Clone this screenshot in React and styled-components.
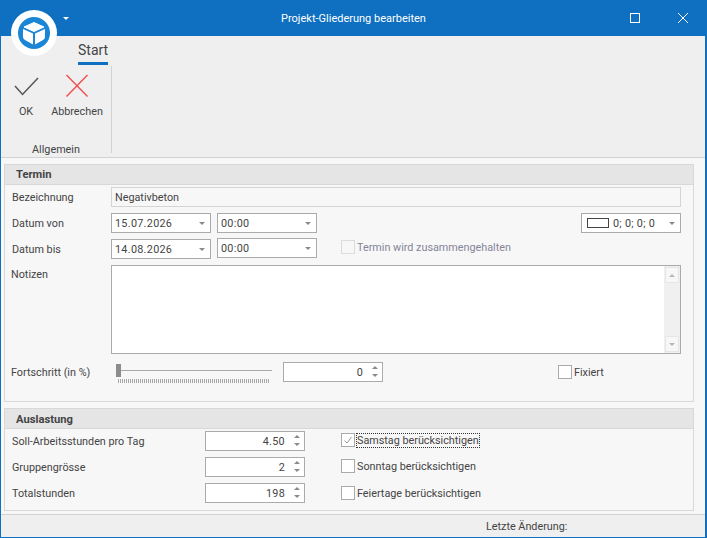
import React from 'react';
import styled, { createGlobalStyle } from 'styled-components';

const GlobalStyle = createGlobalStyle`
  html, body {
    margin: 0;
    padding: 0;
    background: #f0f0f0;
  }
`;

const Window = styled.div`
  position: relative;
  width: 707px;
  height: 538px;
  box-sizing: border-box;
  overflow: hidden;
  display: flex;
  flex-direction: column;
  background: #f7f7f7;
  border-left: 1px solid #0f6fc0;
  border-right: 2px solid #0f6fc0;
  border-bottom: 1px solid #0f6fc0;
  font-family: Roboto, 'Open Sans', sans-serif;
  font-size: 10.8px;
  color: #444;
`;

const TitleBar = styled.div`
  flex: 0 0 36px;
  margin: 0 -2px 0 -1px;
  background: #0f6fc0;
  color: #fff;
  font-size: 11px;
  display: flex;
  align-items: center;
  justify-content: center;
  box-sizing: border-box;
`;

const WindowButton = styled.svg`
  position: absolute;
  top: 12px;
  left: ${(p) => p.$left}px;
`;

const LogoWrap = styled.svg`
  position: absolute;
  left: 10px;
  top: 9px;
`;

const Caret = styled.div`
  position: absolute;
  left: 62px;
  top: 17px;
  border-left: 3px solid transparent;
  border-right: 3px solid transparent;
  border-top: 3px solid #fff;
`;

const Ribbon = styled.div`
  flex: 0 0 122px;
  background: #efefef;
  border-bottom: 1px solid #d2d2d2;
  box-sizing: border-box;
  display: flex;
  flex-direction: column;
`;

const TabStrip = styled.div`
  height: 30px;
  flex: none;
  padding: 5px 0 0 77px;
  box-sizing: border-box;
`;

const Tab = styled.div`
  display: inline-block;
  height: 21px;
  line-height: 18px;
  font-size: 14px;
  color: #444;
  border-bottom: 3px solid #0f6fc0;
`;

const RibbonGroup = styled.div`
  width: 110px;
  height: 87px;
  border-right: 1px solid #d2d2d2;
  display: flex;
  flex-direction: column;
`;

const RibbonButtons = styled.div`
  display: flex;
  flex: none;
  height: 76px;
  padding-top: 8px;
  box-sizing: border-box;
`;

const RibbonButton = styled.div`
  width: ${(p) => p.$width}px;
  display: flex;
  flex-direction: column;
  align-items: center;
  gap: 5px;
  line-height: 13px;
`;

const GroupLabel = styled.div`
  flex: none;
  text-align: center;
  line-height: 15px;
`;

const Content = styled.div`
  flex: 1;
  display: flex;
  flex-direction: column;
  padding: 6px 11px 0 3px;
  gap: 6px;
`;

const Panel = styled.section`
  height: ${(p) => p.$height}px;
  box-sizing: border-box;
  border: 1px solid #d8d8d8;
  background: #f7f7f7;
`;

const PanelHeader = styled.div`
  height: 20px;
  line-height: ${(p) => p.$line || 20}px;
  padding-left: 11px;
  background: #e5e5e5;
  border-bottom: 1px solid #d8d8d8;
  box-sizing: border-box;
  font-size: 11.2px;
  font-weight: 700;
  color: #444;
`;

const PanelBody = styled.div`
  padding: 2px 12px 0 7px;
  display: flex;
  flex-direction: column;
`;

const Row = styled.div`
  display: flex;
  align-items: ${(p) => p.$align || 'center'};
  height: ${(p) => p.$height || 20}px;
  margin-top: ${(p) => p.$top || 0}px;
`;

const Label = styled.label`
  width: ${(p) => p.$width || 99}px;
  flex: none;
  padding-top: ${(p) => p.$pad || 0}px;
  margin-left: ${(p) => (p.$outdent ? -1 : 0)}px;
  padding-right: ${(p) => (p.$outdent ? 1 : 0)}px;
`;

const Field = styled.div`
  width: ${(p) => p.$width || 100}px;
  height: 20px;
  flex: none;
  box-sizing: border-box;
  border: 1px solid ${(p) => (p.$readonly ? '#d4d4d4' : '#ababab')};
  background: ${(p) => (p.$readonly ? '#f7f7f7' : '#fff')};
  margin-left: ${(p) => p.$left || 0}px;
  margin-top: ${(p) => p.$shift || 0}px;
  padding: 0 3px;
  display: flex;
  align-items: center;
  justify-content: ${(p) => (p.$right ? 'flex-end' : 'flex-start')};
  letter-spacing: ${(p) => (p.$readonly ? 0 : 0.3)}px;
  position: relative;
`;

const DropArrow = styled.span`
  margin-left: auto;
  margin-right: 2px;
  border-left: 3px solid transparent;
  border-right: 3px solid transparent;
  border-top: 3px solid #8a8a8a;
`;

const SpinValue = styled.span`
  margin-right: 16px;
`;

const SpinButtons = styled.div`
  position: absolute;
  right: 4px;
  top: 3px;
  display: flex;
  flex-direction: column;
  gap: 5px;
`;

const SpinUp = styled.span`
  border-left: 3px solid transparent;
  border-right: 3px solid transparent;
  border-bottom: 3px solid #8a8a8a;
`;

const SpinDown = styled.span`
  border-left: 3px solid transparent;
  border-right: 3px solid transparent;
  border-top: 3px solid #8a8a8a;
`;

const ScrollUp = styled(SpinUp)`
  border-bottom-color: #b8b8b8;
`;

const ScrollDown = styled(SpinDown)`
  border-top-color: #b8b8b8;
`;

const Swatch = styled.span`
  width: 20px;
  height: 8px;
  border: 1px solid #444;
  background: #fff;
  margin: 0 4px 0 2px;
`;

const Spacer = styled.div`
  flex: 1;
`;

const Notes = styled.div`
  width: 570px;
  height: 89px;
  box-sizing: border-box;
  border: 1px solid #ababab;
  background: #fff;
  display: flex;
  justify-content: flex-end;
`;

const ScrollTrack = styled.div`
  width: 16px;
  background: #f0f0f0;
  display: flex;
  flex-direction: column;
  justify-content: space-between;
`;

const ScrollButton = styled.div`
  height: 14px;
  margin: 1px;
  background: #f7f7f7;
  border: 1px solid #e6e6e6;
  display: flex;
  align-items: center;
  justify-content: center;
`;

const SliderBox = styled.div`
  position: relative;
  width: 160px;
  height: 20px;
  margin-left: 4px;
  flex: none;
`;

const SliderLine = styled.div`
  position: absolute;
  left: 1px;
  right: 3px;
  top: 8px;
  height: 1px;
  background: #a8a8a8;
`;

const SliderThumb = styled.div`
  position: absolute;
  left: 1px;
  top: 2px;
  width: 5px;
  height: 13px;
  background: #8c8c8c;
`;

const SliderTicks = styled.div`
  position: absolute;
  left: 3px;
  top: 17px;
  width: 151px;
  height: 4px;
  background: repeating-linear-gradient(90deg, #a8a8a8 0 1px, transparent 1px 2px);
`;

const CheckWrap = styled.div`
  display: flex;
  align-items: center;
  gap: 2px;
  margin-left: ${(p) => p.$left || 0}px;
  margin-top: ${(p) => p.$shift || 0}px;
  flex: none;
  color: ${(p) => (p.$disabled ? '#85859a' : 'inherit')};
`;

const Box = styled.span`
  width: 14px;
  height: 14px;
  box-sizing: border-box;
  border: 1px solid ${(p) => (p.$disabled ? '#dcdcdc' : '#ababab')};
  background: ${(p) => (p.$disabled ? '#f7f7f7' : '#fff')};
  display: flex;
  align-items: center;
  justify-content: center;
`;

const CheckText = styled.span`
  outline: ${(p) => (p.$focused ? '1px dotted #333' : 'none')};
  line-height: 13px;
`;

const StatusBar = styled.div`
  margin-top: 3px;
  flex: 1;
  background: #efefef;
  border-top: 1px solid #d2d2d2;
  display: flex;
  align-items: center;
  padding-left: 485px;
`;

function DateField({ value, width = 100, left, shift }) {
  return (
    <Field $width={width} $left={left} $shift={shift}>
      {value}
      <DropArrow />
    </Field>
  );
}

function SpinField({ value, left }) {
  return (
    <Field $right $left={left}>
      <SpinValue>{value}</SpinValue>
      <SpinButtons>
        <SpinUp />
        <SpinDown />
      </SpinButtons>
    </Field>
  );
}

function Check({ text, left, shift, checked, disabled, focused }) {
  return (
    <CheckWrap $left={left} $shift={shift} $disabled={disabled}>
      <Box $disabled={disabled}>
        {checked && (
          <svg width="10" height="10" viewBox="0 0 10 10">
            <path d="M1.5 5.5 L4 8 L8.5 2" fill="none" stroke="#9a9a9a" strokeWidth="1" />
          </svg>
        )}
      </Box>
      <CheckText $focused={focused}>{text}</CheckText>
    </CheckWrap>
  );
}

export default function App() {
  return (
    <Window>
      <GlobalStyle />
      <TitleBar>Projekt-Gliederung bearbeiten</TitleBar>
      <LogoWrap width="48" height="48" viewBox="0 0 48 48">
        <circle cx="23" cy="24" r="23" fill="#fff" />
        <circle cx="23" cy="24" r="16" fill="#1b86d6" />
        <path d="M23 13.5 L33 18 L23 22.5 L13 18 Z" fill="#fff" stroke="#fff" strokeLinejoin="round" />
        <path d="M12 20 L22 24.5 L22 35.5 L14 31 Q12 30 12 28 Z" fill="#fff" />
        <path d="M34 20 L24 24.5 L24 35.5 L32 31 Q34 30 34 28 Z" fill="#fff" />
      </LogoWrap>
      <Caret />
      <WindowButton $left={628} width="12" height="12" viewBox="0 0 12 12">
        <rect x="1.5" y="1.5" width="9" height="9" fill="none" stroke="#fff" />
      </WindowButton>
      <WindowButton $left={676} width="12" height="12" viewBox="0 0 12 12">
        <path d="M1 1 L11 11 M11 1 L1 11" stroke="#fff" fill="none" />
      </WindowButton>

      <Ribbon>
        <TabStrip>
          <Tab>Start</Tab>
        </TabStrip>
        <RibbonGroup>
          <RibbonButtons>
            <RibbonButton $width={50}>
              <svg width="26" height="26" viewBox="0 0 26 26">
                <path d="M2 12 L9.5 20.5 L25 4" fill="none" stroke="#555" strokeWidth="1.5" />
              </svg>
              OK
            </RibbonButton>
            <RibbonButton $width={52}>
              <svg width="26" height="26" viewBox="0 0 26 26">
                <path d="M2.5 1 L23.5 22.5 M23.5 1 L2.5 22.5" fill="none" stroke="#f04e4e" strokeWidth="1.4" />
              </svg>
              Abbrechen
            </RibbonButton>
          </RibbonButtons>
          <GroupLabel>Allgemein</GroupLabel>
        </RibbonGroup>
      </Ribbon>

      <Content>
        <Panel $height={238}>
          <PanelHeader>Termin</PanelHeader>
          <PanelBody>
            <Row>
              <Label>Bezeichnung</Label>
              <Field $readonly $width={570}>Negativbeton</Field>
            </Row>
            <Row $top={6}>
              <Label>Datum von</Label>
              <DateField value="15.07.2026" />
              <DateField value="00:00" left={6} />
              <Spacer />
              <Field>
                <Swatch />
                0; 0; 0; 0
                <DropArrow />
              </Field>
            </Row>
            <Row $top={6}>
              <Label>Datum bis</Label>
              <DateField value="14.08.2026" />
              <DateField value="00:00" left={6} shift={-2} />
              <Check text="Termin wird zusammengehalten" left={24} shift={-4} disabled />
            </Row>
            <Row $top={6} $height={89} $align="flex-start">
              <Label $pad={3} $outdent>Notizen</Label>
              <Notes>
                <ScrollTrack>
                  <ScrollButton><ScrollUp /></ScrollButton>
                  <ScrollButton><ScrollDown /></ScrollButton>
                </ScrollTrack>
              </Notes>
            </Row>
            <Row $top={8}>
              <Label $outdent>Fortschritt (in %)</Label>
              <SliderBox>
                <SliderLine />
                <SliderThumb />
                <SliderTicks />
              </SliderBox>
              <SpinField value="0" left={8} />
              <Check text="Fixiert" left={175} />
            </Row>
          </PanelBody>
        </Panel>

        <Panel $height={103}>
          <PanelHeader $line={22}>Auslastung</PanelHeader>
          <PanelBody>
            <Row>
              <Label $width={193}>Soll-Arbeitsstunden pro Tag</Label>
              <SpinField value="4.50" />
              <Check text="Samstag berücksichtigen" left={36} shift={-2} checked focused />
            </Row>
            <Row $top={6}>
              <Label $width={193}>Gruppengrösse</Label>
              <SpinField value="2" />
              <Check text="Sonntag berücksichtigen" left={36} shift={-2} />
            </Row>
            <Row $top={6}>
              <Label $width={193}>Totalstunden</Label>
              <SpinField value="198" />
              <Check text="Feiertage berücksichtigen" left={36} />
            </Row>
          </PanelBody>
        </Panel>
      </Content>

      <StatusBar>Letzte Änderung:</StatusBar>
    </Window>
  );
}
